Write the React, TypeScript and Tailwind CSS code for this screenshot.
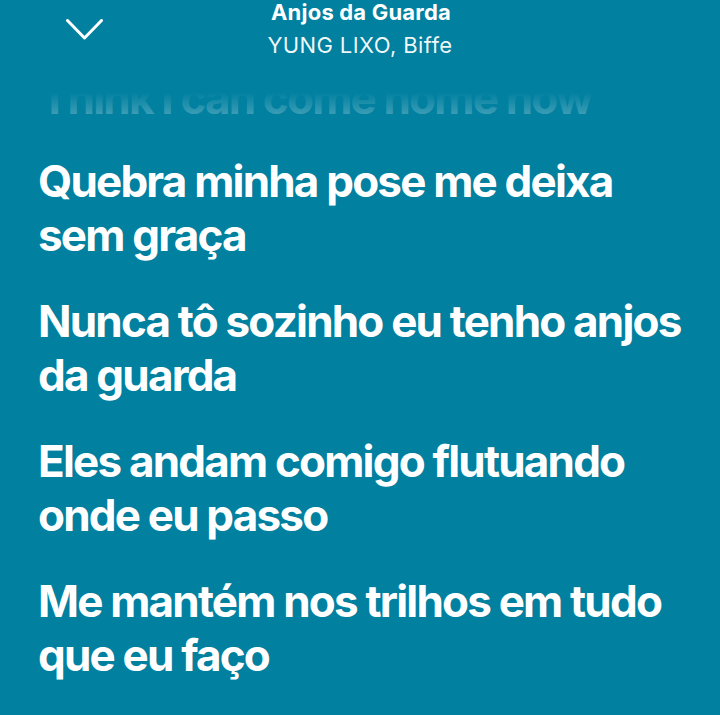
import React from 'react';

const lyrics = [
  ['Quebra minha pose me deixa', 'sem graça'],
  ['Nunca tô sozinho eu tenho anjos', 'da guarda'],
  ['Eles andam comigo flutuando', 'onde eu passo'],
  ['Me mantém nos trilhos em tudo', 'que eu faço'],
];

const App: React.FC = () => {
  return (
    <div className="h-[715px] w-[720px] overflow-hidden bg-[#0180a0] font-['Inter','Lato',sans-serif] text-white">
      <div className="relative z-10 bg-[#0180a0]">
        <div className="relative flex h-[66px] flex-col items-center">
          <svg className="absolute left-[66px] top-[19px] h-[21px] w-[37px]" viewBox="0 0 37 21" fill="none">
            <path d="M1.5 1.5 L18.5 19 L35.5 1.5" stroke="white" strokeWidth="3" strokeLinecap="round" strokeLinejoin="round" />
          </svg>
          <div className="pl-[2px] text-[22px] font-bold leading-[24px] tracking-[0.2px]">Anjos da Guarda</div>
          <div className="mt-[9px] text-[22px] leading-[24px] tracking-[0.4px] text-white/95">YUNG LIXO, Biffe</div>
        </div>
      </div>
      <div className="relative h-[48px] overflow-hidden">
        <div className="absolute left-[40px] top-[5px] whitespace-nowrap text-[44px] font-bold leading-[54px] tracking-[-1.8px] text-white/40">
          Think I can come home now
        </div>
        <div className="absolute inset-0 bg-gradient-to-b from-[#0180a0] from-[55%] to-[#0180a0]/40" />
      </div>
      <div className="flex flex-col gap-[32px] px-[38px] pt-[40px]">
        {lyrics.map((block, i) => (
          <div key={i} className="whitespace-nowrap text-[44px] font-bold leading-[54px] tracking-[-1.8px]">
            {block.map((l, j) => (
              <div key={j}>{l}</div>
            ))}
          </div>
        ))}
      </div>
    </div>
  );
};

export default App;
